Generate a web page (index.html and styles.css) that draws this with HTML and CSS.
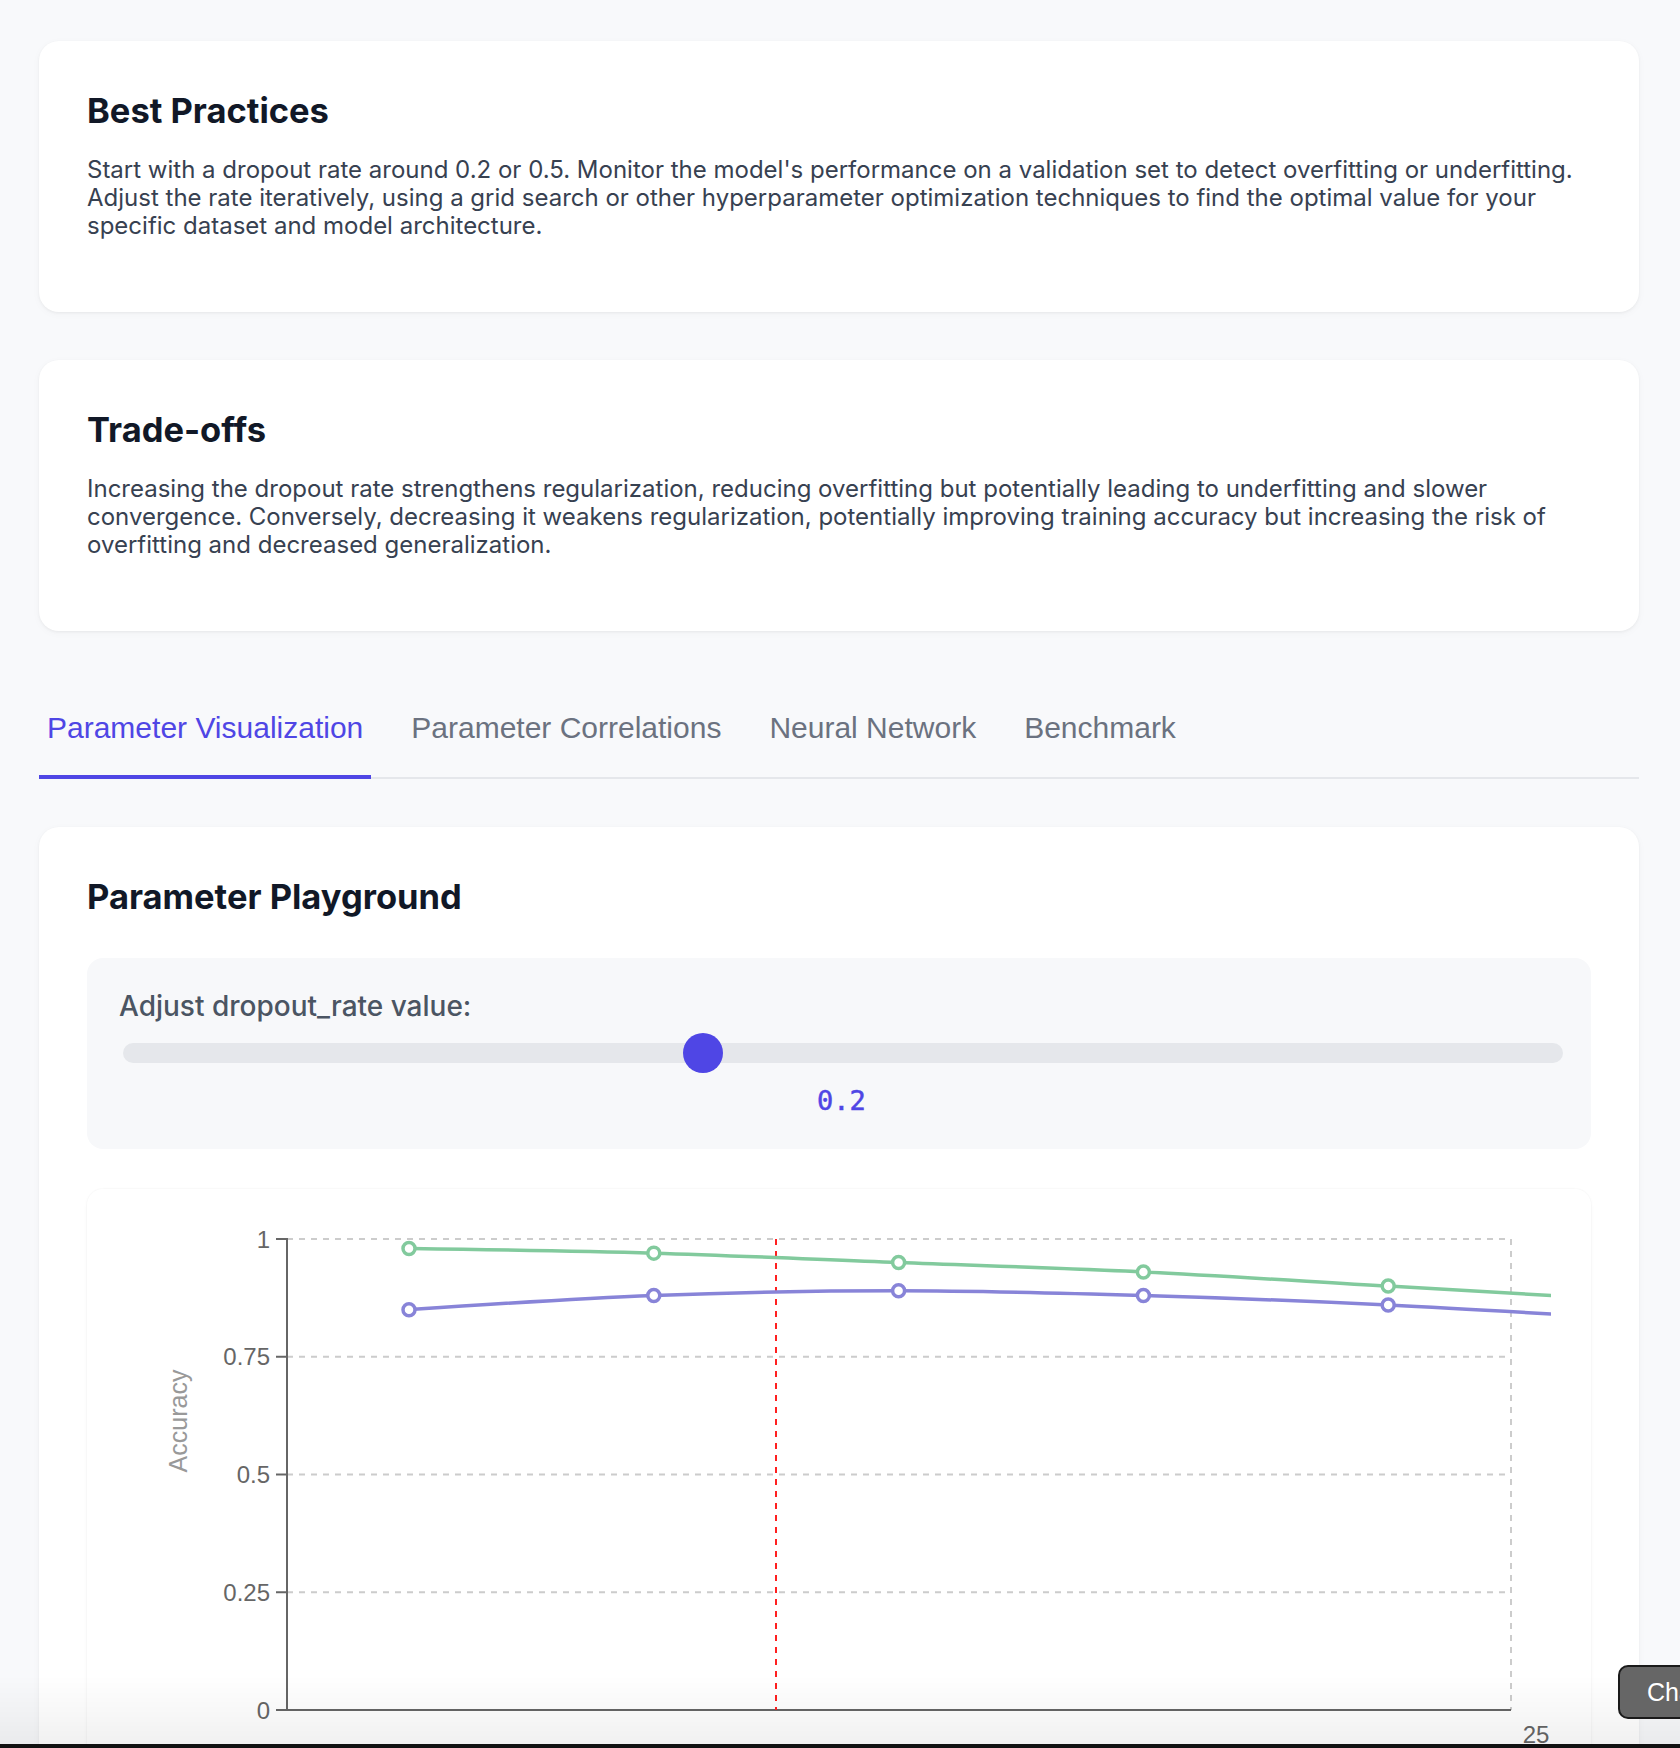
FILE: index.html
```html
<!DOCTYPE html>
<html lang="en">
<head>
<meta charset="utf-8">
<title>Dropout Rate</title>
<link rel="stylesheet" href="styles.css">
</head>
<body>
<main class="page">
  <section class="card">
    <h2 class="card-title">Best Practices</h2>
    <p class="card-text">Start with a dropout rate around 0.2 or 0.5. Monitor the model's performance on a validation set to detect overfitting or underfitting. Adjust the rate iteratively, using a grid search or other hyperparameter optimization techniques to find the optimal value for your specific dataset and model architecture.</p>
  </section>

  <section class="card">
    <h2 class="card-title">Trade-offs</h2>
    <p class="card-text">Increasing the dropout rate strengthens regularization, reducing overfitting but potentially leading to underfitting and slower convergence. Conversely, decreasing it weakens regularization, potentially improving training accuracy but increasing the risk of overfitting and decreased generalization.</p>
  </section>

  <nav class="tabs">
    <button class="tab active">Parameter Visualization</button>
    <button class="tab">Parameter Correlations</button>
    <button class="tab">Neural Network</button>
    <button class="tab">Benchmark</button>
  </nav>

  <section class="card playground">
    <h2 class="card-title pg-title">Parameter Playground</h2>
    <div class="slider-panel">
      <label class="slider-label" for="dr">Adjust dropout_rate value:</label>
      <input id="dr" class="range" type="range" min="0" max="0.5" step="0.1" value="0.2">
      <div class="slider-value">0.2</div>
    </div>

    <div class="chart-card">
      <svg class="chart" width="1424" height="540" viewBox="0 0 1424 540" xmlns="http://www.w3.org/2000/svg">
        <g stroke="#cccccc" stroke-width="2" stroke-dasharray="6 6" fill="none">
          <line x1="160" y1="10" x2="1384" y2="10"/>
          <line x1="160" y1="127.75" x2="1384" y2="127.75"/>
          <line x1="160" y1="245.5" x2="1384" y2="245.5"/>
          <line x1="160" y1="363.25" x2="1384" y2="363.25"/>
          <line x1="1384" y1="10" x2="1384" y2="481"/>
        </g>
        <g stroke="#666666" stroke-width="2">
          <line x1="160" y1="9" x2="160" y2="482"/>
          <line x1="159" y1="481" x2="1384" y2="481"/>
          <line x1="149" y1="10" x2="160" y2="10"/>
          <line x1="149" y1="127.75" x2="160" y2="127.75"/>
          <line x1="149" y1="245.5" x2="160" y2="245.5"/>
          <line x1="149" y1="363.25" x2="160" y2="363.25"/>
          <line x1="149" y1="481" x2="160" y2="481"/>
        </g>
        <g class="tick" text-anchor="end">
          <text x="143" y="18.5">1</text>
          <text x="143" y="136.25">0.75</text>
          <text x="143" y="254">0.5</text>
          <text x="143" y="371.75">0.25</text>
          <text x="143" y="489.5">0</text>
        </g>
        <text class="tick" x="1409" y="513.5" text-anchor="middle">25</text>
        <text class="axis-label" x="51" y="192" text-anchor="middle" dominant-baseline="central" transform="rotate(-90 51 192)">Accuracy</text>

        <line x1="649" y1="10" x2="649" y2="481" stroke="#ff2020" stroke-width="2" stroke-dasharray="6 6"/>

        <path d="M282,19.42 C363.6,20.6 445.2,21.77 526.8,24.13 C608.4,26.49 690,30.41 771.6,33.55 C853.2,36.69 934.8,39.04 1016.4,42.97 C1098,46.9 1179.6,52.39 1261.2,57.1 C1342.8,61.81 1424.4,66.52 1506,71.23" fill="none" stroke="#82ca9d" stroke-width="3.5"/>
        <path d="M282,80.65 C363.6,75.16 445.2,69.66 526.8,66.52 C608.4,63.38 690,61.81 771.6,61.81 C853.2,61.81 934.8,64.17 1016.4,66.52 C1098,68.88 1179.6,72.02 1261.2,75.94 C1342.8,79.87 1424.4,84.97 1506,90.07" fill="none" stroke="#8884d8" stroke-width="3.5"/>

        <g fill="#ffffff" stroke="#82ca9d" stroke-width="3.5">
          <circle cx="282" cy="19.42" r="6"/>
          <circle cx="526.8" cy="24.13" r="6"/>
          <circle cx="771.6" cy="33.55" r="6"/>
          <circle cx="1016.4" cy="42.97" r="6"/>
          <circle cx="1261.2" cy="57.1" r="6"/>
        </g>
        <g fill="#ffffff" stroke="#8884d8" stroke-width="3.5">
          <circle cx="282" cy="80.65" r="6"/>
          <circle cx="526.8" cy="66.52" r="6"/>
          <circle cx="771.6" cy="61.81" r="6"/>
          <circle cx="1016.4" cy="66.52" r="6"/>
          <circle cx="1261.2" cy="75.94" r="6"/>
        </g>
      </svg>
    </div>
  </section>
</main>

<div class="bottom-fade"></div>
<div class="bottom-edge"></div>
<button class="chat-btn">Chat</button>
</body>
</html>
```

FILE: styles.css
```css
html, body {
  margin: 0;
  padding: 0;
}

body {
  background: #f8f9fb;
  font-family: Inter, "Noto Sans", sans-serif;
  color: #374151;
}

.page {
  padding: 41px 41px 0 39px;
}

.card {
  background: #ffffff;
  border-radius: 20px;
  box-shadow: 0 1px 3px rgba(0, 0, 0, 0.05), 0 2px 8px rgba(0, 0, 0, 0.03);
  padding: 50px 48px 72px;
  margin-bottom: 48px;
}

.card-title {
  margin: 0 0 25px;
  font-family: Inter, sans-serif;
  font-weight: 700;
  font-size: 34.5px;
  line-height: 40px;
  color: #111827;
}

.card-text {
  margin: 0;
  font-size: 24px;
  line-height: 28px;
  color: #374151;
}

.tabs {
  display: flex;
  gap: 32px;
  border-bottom: 2px solid #e5e7eb;
  margin-bottom: 48px;
}

.tab {
  font-family: "Liberation Sans", Arial, sans-serif;
  font-size: 30px;
  line-height: 34px;
  padding: 32px 8px 30px;
  margin: 0 0 -2px;
  border: 0;
  border-bottom: 4px solid transparent;
  background: none;
  color: #6b7280;
  cursor: pointer;
}

.tab.active {
  color: #4f46e5;
  border-bottom-color: #4f46e5;
}

.playground {
  padding-bottom: 48px;
}

.pg-title {
  margin-bottom: 41px;
}

.slider-panel {
  background: #f7f8fa;
  border-radius: 16px;
  padding: 32px 27px 30px 32px;
}

.slider-label {
  display: block;
  font-size: 28px;
  line-height: 32px;
  font-weight: 500;
  color: #4b5563;
  margin-bottom: 21px;
}

.range {
  -webkit-appearance: none;
  appearance: none;
  display: block;
  width: 1440px;
  height: 20px;
  margin: 10px 0 10px 4px;
  padding: 0;
  background: #e5e7eb;
  border-radius: 10px;
  outline: none;
}

.range::-webkit-slider-thumb {
  -webkit-appearance: none;
  appearance: none;
  width: 40px;
  height: 40px;
  border-radius: 50%;
  background: #4f46e5;
  border: none;
}

.slider-value {
  margin-top: 20px;
  text-align: center;
  font-family: "DejaVu Sans Mono", "Liberation Mono", monospace;
  font-size: 27px;
  line-height: 36px;
  font-weight: 400;
  -webkit-text-stroke: 0.5px #4f46e5;
  color: #4f46e5;
}

.chart-card {
  margin-top: 40px;
  background: #ffffff;
  border-radius: 16px;
  box-shadow: 0 0 0 1px rgba(0, 0, 0, 0.015), 0 1px 4px rgba(0, 0, 0, 0.03);
  padding: 40px;
}

.chart {
  display: block;
  overflow: hidden;
}

.tick {
  font-family: "Liberation Sans", Arial, sans-serif;
  font-size: 24px;
  fill: #666666;
}

.axis-label {
  font-family: "Liberation Sans", Arial, sans-serif;
  font-size: 25px;
  fill: #999999;
}

.bottom-fade {
  position: fixed;
  left: 0;
  right: 0;
  bottom: 0;
  height: 72px;
  background: linear-gradient(to bottom, rgba(0, 0, 0, 0) 0%, rgba(0, 0, 0, 0.06) 100%);
  pointer-events: none;
}

.bottom-edge {
  position: fixed;
  left: 0;
  right: 0;
  bottom: 0;
  height: 4px;
  background: #111111;
}

.chat-btn {
  position: fixed;
  left: 1618px;
  bottom: 29px;
  height: 54px;
  padding: 0 27px;
  background: #666666;
  border: 2px solid #1a1a1a;
  border-radius: 10px;
  color: #ffffff;
  font-family: "Liberation Sans", Arial, sans-serif;
  font-size: 25px;
  white-space: nowrap;
}
```
